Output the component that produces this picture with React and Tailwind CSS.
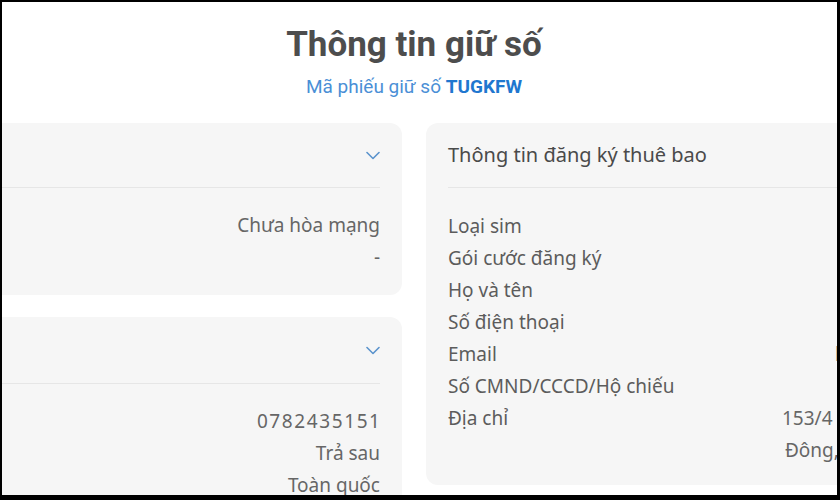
import React from "react";

const BODY_FONT = { fontFamily: '"Noto Sans", "Open Sans", sans-serif' };

function Chevron() {
  return (
    <svg width="14" height="9" viewBox="0 0 14 9" fill="none" className="text-[#5b93cc]">
      <polyline points="1,1.5 7,7.5 13,1.5" stroke="currentColor" strokeWidth="1.6" strokeLinecap="round" strokeLinejoin="round" />
    </svg>
  );
}

// collapsed summary card; its left part (labels) is outside the visible area
function CollapsedCard({ headerH, values }) {
  return (
    <div className="bg-[#f6f6f6] rounded-xl">
      <div className={`flex items-center justify-end px-[22px] ${headerH}`}>
        <Chevron />
      </div>
      <div className="mx-[22px] border-t border-[#e6e6e6]" />
      <div className="px-[22px] pt-[21px] pb-[22px] flex flex-col">
        {values.map((v, i) => (
          <div key={i} className="flex justify-end h-8 items-center text-[19px] text-[#666]">
            {v}
          </div>
        ))}
      </div>
    </div>
  );
}

const subscriberRows = [
  { label: "Loại sim", value: "" },
  { label: "Gói cước đăng ký", value: "" },
  { label: "Họ và tên", value: "" },
  { label: "Số điện thoại", value: "" },
  { label: "Email", value: "lethianh@gmail.com", offset: "pl-[53px]" },
  { label: "Số CMND/CCCD/Hộ chiếu", value: "" },
  { label: "Địa chỉ", value: "153/4 Nguyễn Văn Đậu" },
  { label: "", value: "Đông, TP. Hồ Chí Minh", offset: "pl-[3px]" },
];

export default function App() {
  return (
    <div className="w-[840px] h-[500px] bg-black pt-[2px] pl-[2px] pr-[3px] pb-[5px]">
      <div className="w-full h-full bg-white overflow-hidden" style={BODY_FONT}>
        {/* heading */}
        <div
          className="flex flex-col items-center pt-[23px] pr-[11px]"
          style={{ fontFamily: "Roboto, sans-serif" }}
        >
          <h1 className="text-[35px] leading-[40px] font-bold text-[#4d4d4d]">
            Thông tin giữ số
          </h1>
          <p className="mt-[10px] text-[19px] leading-6 text-[#4a8fd6]">
            Mã phiếu giữ số <span className="font-bold text-[#1f77cf]">TUGKFW</span>
          </p>
        </div>

        {/* columns */}
        <div className="flex gap-6 ml-[-80px] mt-6">
          <div className="w-[480px] shrink-0 flex flex-col gap-[22px]">
            <CollapsedCard headerH="h-16" values={["Chưa hòa mạng", "-"]} />
            <CollapsedCard
              headerH="h-[66px]"
              values={[
                <span key="n" className="tracking-[1.6px] mr-[-1.6px]">0782435151</span>,
                "Trả sau",
                "Toàn quốc",
              ]}
            />
          </div>

          <div className="w-[480px] shrink-0">
            <div className="bg-[#f6f6f6] rounded-xl">
              <div className="h-16 flex items-center px-[22px] text-[20px] text-[#4a4a4a]">
                Thông tin đăng ký thuê bao
              </div>
              <div className="ml-[22px] border-t border-[#e6e6e6]" />
              <div className="pl-[22px] pt-[22px] pb-[19px] flex flex-col">
                {subscriberRows.map((r, i) => (
                  <div key={i} className="grid grid-cols-[334px_1fr] h-8 items-center text-[19px] text-[#5c5c5c] whitespace-nowrap">
                    <span>{r.label}</span>
                    <span className={`text-[#666] ${r.offset || ""}`}>{r.value}</span>
                  </div>
                ))}
              </div>
            </div>
          </div>
        </div>
      </div>
    </div>
  );
}
